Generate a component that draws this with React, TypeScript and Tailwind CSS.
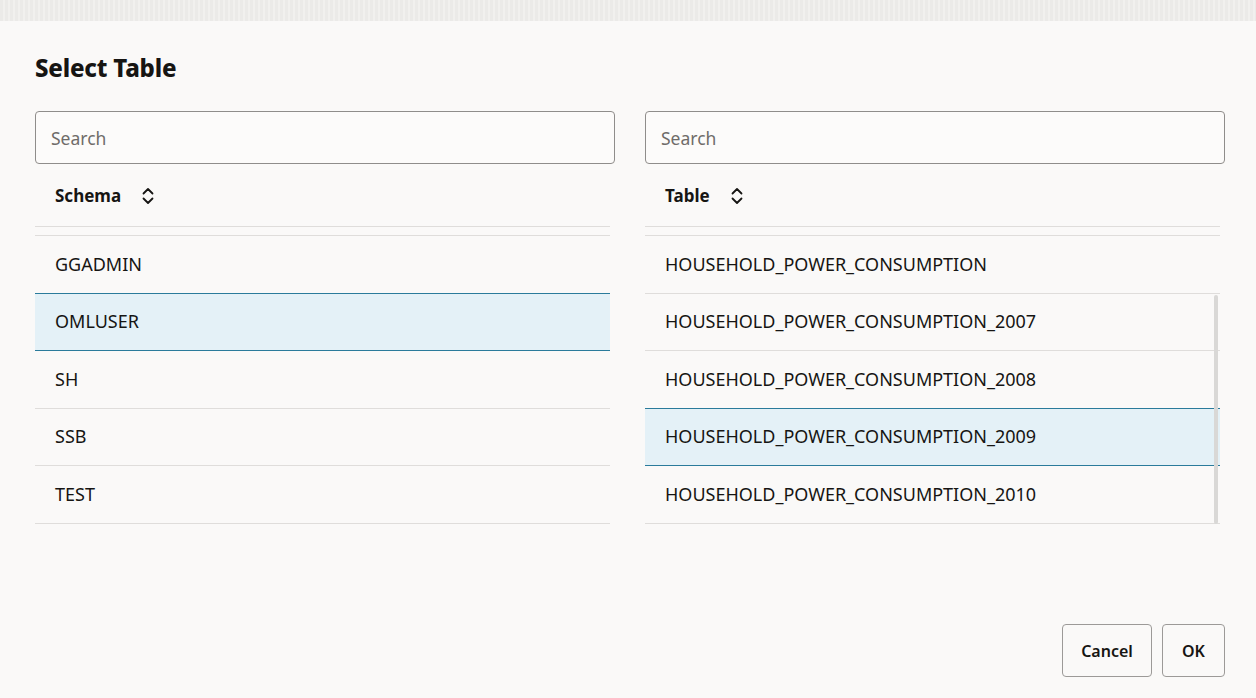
import React, { useState } from 'react';

const schemas = ['GGADMIN', 'OMLUSER', 'SH', 'SSB', 'TEST'];
const tables = [
  'HOUSEHOLD_POWER_CONSUMPTION',
  'HOUSEHOLD_POWER_CONSUMPTION_2007',
  'HOUSEHOLD_POWER_CONSUMPTION_2008',
  'HOUSEHOLD_POWER_CONSUMPTION_2009',
  'HOUSEHOLD_POWER_CONSUMPTION_2010',
];

const SortIcon: React.FC = () => (
  <svg width="12" height="18" viewBox="0 0 12 18" fill="none" stroke="#161513" strokeWidth="1.8" strokeLinecap="round" strokeLinejoin="round">
    <path d="M1.5 6.5 L6 2 L10.5 6.5" />
    <path d="M1.5 11.5 L6 16 L10.5 11.5" />
  </svg>
);

interface ListPanelProps {
  label: string;
  items: string[];
  selected: string;
  onSelect: (v: string) => void;
  scrollbar?: boolean;
}

const ListPanel: React.FC<ListPanelProps> = ({ label, items, selected, onSelect, scrollbar }) => {
  return (
    <div className="flex flex-col">
      <input
        type="text"
        placeholder="Search"
        className="h-[53px] w-full rounded-[4px] border border-[#8f8d8b] bg-[#fcfbfa] px-[15px] text-[17.5px] text-[#161513] outline-none placeholder:text-[#6f6c69]"
      />
      <div className="mr-[5px] flex h-[63px] items-center gap-[21px] border-b border-[#dfdddb] pl-[20px] pt-[1px]">
        <span className="text-[17px] font-bold text-[#161513]">{label}</span>
        <SortIcon />
      </div>
      <div className="relative mr-[5px] pt-[8px]">
        <div className="border-t border-[#dfdddb]" />
        {items.map((item) => {
          const isSel = item === selected;
          return (
            <div
              key={item}
              onClick={() => onSelect(item)}
              className={
                isSel
                  ? 'relative -mt-px flex h-[58.5px] cursor-pointer items-center border-y border-[#2a7b9b] bg-[#e4f1f7] pl-[20px] text-[18px] text-[#161513]'
                  : 'flex h-[57.5px] cursor-pointer items-center border-b border-[#dfdddb] pl-[20px] text-[18px] text-[#161513]'
              }
            >
              {item}
            </div>
          );
        })}
        {scrollbar && (
          <div className="absolute right-[2px] top-[68px] bottom-0 w-[4px] rounded-sm bg-[#d9d8d6]" />
        )}
      </div>
    </div>
  );
};

const App: React.FC = () => {
  const [schema, setSchema] = useState('OMLUSER');
  const [table, setTable] = useState('HOUSEHOLD_POWER_CONSUMPTION_2009');

  return (
    <div
      className="flex h-[698px] w-[1256px] flex-col overflow-hidden bg-[#faf9f8]"
      style={{ fontFamily: '"Noto Sans", "Open Sans", Arial, sans-serif' }}
    >
      <div className="h-[21px] shrink-0 bg-[repeating-linear-gradient(90deg,#ebeae8_0px,#ebeae8_3px,#f1f0ee_3px,#f1f0ee_5px)]" />
      <div className="flex flex-1 flex-col pl-[35px] pr-[31px] pb-[21px]">
        <h1 className="mt-[32px] text-[24px] font-extrabold leading-[30px] tracking-[-0.2px] text-[#161513]">Select Table</h1>
        <div className="mt-[28px] grid grid-cols-2 gap-[30px]">
          <ListPanel label="Schema" items={schemas} selected={schema} onSelect={setSchema} />
          <ListPanel label="Table" items={tables} selected={table} onSelect={setTable} scrollbar />
        </div>
        <div className="mt-auto flex justify-end gap-[10px]">
          <button className="h-[53px] w-[90px] rounded-[4px] border border-[#9c9a98] bg-[#faf9f8] text-[16px] font-semibold text-[#161513]">
            Cancel
          </button>
          <button className="h-[53px] w-[63px] rounded-[4px] border border-[#9c9a98] bg-[#faf9f8] text-[16px] font-semibold text-[#161513]">
            OK
          </button>
        </div>
      </div>
    </div>
  );
};

export default App;
